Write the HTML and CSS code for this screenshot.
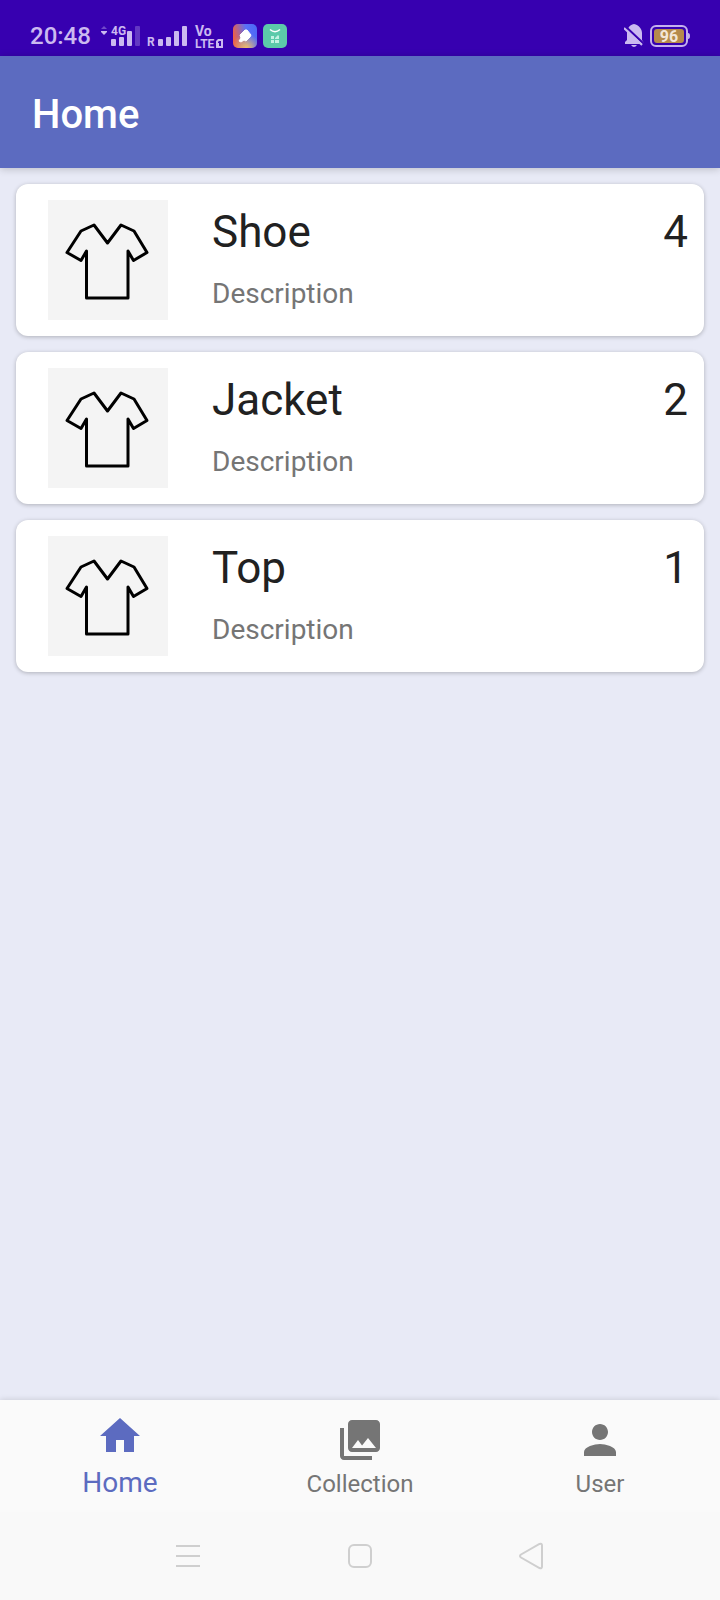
FILE: index.html
```html
<!DOCTYPE html>
<html lang="en">
<head>
<meta charset="utf-8">
<meta name="viewport" content="width=device-width, initial-scale=1">
<title>Home</title>
<link rel="stylesheet" href="styles.css">
</head>
<body>
<svg class="defs" aria-hidden="true">
  <symbol id="shirt" viewBox="0 0 120 120">
    <path d="M33 31 46 25 59.500 43 73 25 86 31 99 52.500 85.500 60.500 80 51V98H38.500V51L33 60.500 19 52.500Z" fill="none" stroke="#000" stroke-width="3" stroke-linejoin="round"/>
  </symbol>
</svg>
<div class="screen">
  <div class="status">
    <span class="clock">20:48</span>
    <svg class="signals" width="134" height="28" viewBox="99 22 134 28" aria-hidden="true">
      <path d="M101 29 104 26 107 29Z" opacity=".4"/>
      <path d="M101 31H107V32L104 35 101 32Z"/>
      <text class="mini bold" x="111" y="35">4G</text>
      <rect x="111" y="39" width="5" height="7" rx="1"/>
      <rect x="119" y="37" width="5" height="9" rx="1"/>
      <rect x="127" y="31" width="5" height="15" rx="1"/>
      <rect x="135" y="26" width="5" height="20" rx="1" opacity=".3"/>
      <text class="mini bold" x="147" y="46">R</text>
      <rect x="158" y="39" width="5" height="7" rx="1"/>
      <rect x="166" y="37" width="5" height="9" rx="1"/>
      <rect x="174" y="31" width="5" height="15" rx="1"/>
      <rect x="182" y="26" width="5" height="20" rx="1"/>
      <text class="small bold" x="195" y="36">Vo</text>
      <text class="mini bold" x="195" y="48">LTE</text>
      <path fill-rule="evenodd" d="M218 39H223V48H216V41ZM219 41 218 42V43H219V46H221V41Z"/>
    </svg>
    <svg class="app" width="24" height="24" viewBox="0 0 24 24" aria-hidden="true">
      <defs>
        <linearGradient id="warm" x1="0" y1="0.300" x2="1" y2="0.100">
          <stop offset="0" stop-color="#e8604c"/><stop offset=".55" stop-color="#5a70f8"/><stop offset="1" stop-color="#4b68f4"/>
        </linearGradient>
        <radialGradient id="glow" cx=".55" cy="1" r=".6">
          <stop offset="0" stop-color="#f2bd68"/><stop offset="1" stop-color="#f2bd68" stop-opacity="0"/>
        </radialGradient>
      </defs>
      <rect width="24" height="24" rx="5" fill="url(#warm)"/>
      <rect width="24" height="24" rx="5" fill="url(#glow)"/>
      <path d="M12 6 14 6 18 11 17 13 13 17 11 16 8 18 6 17 8 14 7 11Z" fill="#fff" stroke="#fff" stroke-linejoin="round"/>
    </svg>
    <svg class="app" width="24" height="24" viewBox="0 0 24 24" aria-hidden="true">
      <rect width="24" height="24" rx="5" fill="#5ccaaa"/>
      <path d="M7 5.500Q12 10 17 5.500" fill="none" stroke="#fff" stroke-width="1.500"/>
      <path d="M8 12h3v3H8zM12 14l3-3 1 1v3h-4zM8 16h3v3H8zM12 16h4v3h-4z" fill="#c3f3e3"/>
    </svg>
    <svg class="bell" width="20" height="24" viewBox="0 0 20 24" aria-hidden="true">
      <path d="M10 0C15 1 18 5 18 9V16L20 19V20H1V18L3 16V9C3 5 5 1 10 0ZM7 21H13Q10 25 7 21Z" fill="#cbb9f0"/>
      <path d="M1 2 20 20" stroke="#3700b0" stroke-width="2"/>
      <path d="M0 4 18 21" stroke="#cbb9f0" stroke-width="2"/>
    </svg>
    <svg width="40" height="22" viewBox="0 0 40 22" role="img" aria-label="Battery 96 percent">
      <rect x="1" y="1" width="36" height="20" rx="5" fill="none" stroke="#c4b0ee" stroke-width="2"/>
      <path d="M38 8Q40 8 40 11T38 14Z" fill="#c4b0ee"/>
      <rect x="4" y="4" width="30" height="14" rx="3" fill="#b58a4c"/>
      <text class="level" x="19" y="17" text-anchor="middle">96</text>
    </svg>
  </div>
  <header class="bar"><h1 class="heading">Home</h1></header>
  <main class="list">
    <article class="card">
      <svg class="thumb" aria-hidden="true"><use href="#shirt"/></svg>
      <div class="info"><h2 class="name">Shoe</h2><p class="desc">Description</p></div>
      <span class="count">4</span>
    </article>
    <article class="card">
      <svg class="thumb" aria-hidden="true"><use href="#shirt"/></svg>
      <div class="info"><h2 class="name">Jacket</h2><p class="desc">Description</p></div>
      <span class="count">2</span>
    </article>
    <article class="card">
      <svg class="thumb" aria-hidden="true"><use href="#shirt"/></svg>
      <div class="info"><h2 class="name">Top</h2><p class="desc">Description</p></div>
      <span class="count">1</span>
    </article>
  </main>
  <nav class="tabs">
    <a class="tab active" href="#home" aria-current="page">
      <svg class="icon" viewBox="0 0 24 24" aria-hidden="true"><path d="M10 20v-6h4v6h5v-8h3L12 3 2 12h3v8z"/></svg>
      <span>Home</span>
    </a>
    <a class="tab" href="#collection">
      <svg class="icon" viewBox="0 0 24 24" aria-hidden="true"><path d="M22 16V4c0-1.100-.9-2-2-2H8c-1.100 0-2 .9-2 2v12c0 1.100.9 2 2 2h12c1.100 0 2-.9 2-2zm-11-4l2.030 2.710L16 11l4 5H8l3-4zM2 6v14c0 1.100.9 2 2 2h14v-2H4V6H2z"/></svg>
      <span>Collection</span>
    </a>
    <a class="tab" href="#user">
      <svg class="icon" viewBox="0 0 24 24" aria-hidden="true"><path d="M12 12c2.210 0 4-1.790 4-4s-1.790-4-4-4-4 1.790-4 4 1.790 4 4 4zm0 2c-2.670 0-8 1.340-8 4v2h16v-2c0-2.660-5.330-4-8-4z"/></svg>
      <span>User</span>
    </a>
  </nav>
  <div class="system">
    <button class="key" aria-label="Recent apps"><svg width="28" height="28" viewBox="0 0 28 28"><path d="M3 4H27M3 14H27M3 24H27"/></svg></button>
    <button class="key" aria-label="Home screen"><svg width="28" height="28" viewBox="0 0 28 28"><rect x="3" y="3" width="22" height="22" rx="5"/></svg></button>
    <button class="key" aria-label="Back"><svg width="28" height="28" viewBox="0 0 28 28"><path d="M2 12.500 20.500 2Q23 1 23 3.500V24.500Q23 27 20.500 26L2 15.500Q0 14 2 12.500Z"/></svg></button>
  </div>
</div>
</body>
</html>
```
FILE: styles.css
```css
* {
  box-sizing: border-box;
}

body {
  margin: 0;
  font-family: Roboto, "Liberation Sans", sans-serif;
  background: #e8eaf6;
}

h1, h2, p {
  margin: 0;
  font-weight: 400;
}

.defs {
  display: none;
}

.screen {
  display: flex;
  flex-direction: column;
  min-height: 100vh;
}

.status {
  display: flex;
  align-items: center;
  height: 56px;
  padding: 16px 30px 0;
  background: #3700b0;
}

.clock {
  width: 69px;
  color: #cbb9f0;
  font-size: 24px;
  font-weight: 500;
}

.signals {
  fill: #cbb9f0;
}

.mini {
  font-size: 12px;
}

.small {
  font-size: 14px;
}

.bold {
  font-weight: 700;
}

.app {
  margin-right: 6px;
}

.bell {
  margin: 0 6px 0 auto;
}

.level {
  fill: #f3e6d8;
  font-size: 16px;
  font-weight: 700;
}

.bar {
  display: flex;
  align-items: center;
  height: 112px;
  padding: 4px 32px 0;
  color: #fff;
  background: #5c6bc0;
  box-shadow: 0 1px 8px rgba(0, 0, 0, 0.2);
}

.heading {
  font-size: 40px;
  font-weight: 500;
}

.list {
  flex: 1;
  display: flex;
  flex-direction: column;
  gap: 16px;
  padding: 16px;
}

.card {
  display: flex;
  padding: 16px 16px 12px 32px;
  background: #fff;
  border-radius: 12px;
  box-shadow: 0 1px 4px rgba(0, 0, 0, 0.25);
}

.thumb {
  width: 120px;
  height: 120px;
  background: #f4f4f4;
}

.info {
  flex: 1;
  padding-left: 44px;
}

.name,
.count {
  color: #212121;
  font-size: 44px;
  line-height: 64px;
}

.desc {
  color: #757575;
  font-size: 28px;
  line-height: 60px;
}

.tabs {
  display: flex;
  height: 112px;
  background: #fafafa;
  box-shadow: 0 0 6px rgba(0, 0, 0, 0.15);
}

.tab {
  flex: 1;
  display: flex;
  flex-direction: column;
  align-items: center;
  padding-top: 16px;
  color: #757575;
  font-size: 24px;
  line-height: 40px;
  text-decoration: none;
}

.tab.active {
  padding-top: 12px;
  color: #5c6bc0;
  font-size: 28px;
  line-height: 46px;
}

.icon {
  width: 48px;
  height: 48px;
  fill: currentColor;
}

.system {
  display: flex;
  align-items: center;
  justify-content: space-between;
  height: 88px;
  padding: 0 24%;
  background: #f9f9f9;
}

.key {
  display: flex;
  padding: 0;
  border: 0;
  background: none;
  fill: none;
  stroke: #cfcfcf;
  stroke-width: 2;
}
```
